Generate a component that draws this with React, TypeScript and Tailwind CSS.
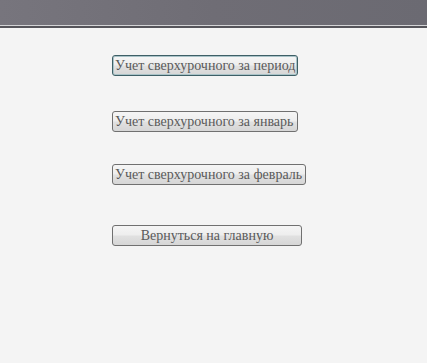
import React from "react";

const btn =
  "h-[21px] border rounded-[3px] bg-[linear-gradient(#f5f5f5_0%,#eeeeee_45%,#e0e0e0_55%,#d6d6d6_100%)] text-[#5a5a5a] text-[14px] leading-[19px] whitespace-nowrap";

export default function App() {
  return (
    <div className="w-[427px] h-[363px] bg-[#f4f4f4] flex flex-col" style={{ fontFamily: '"Liberation Serif", serif' }}>
      <div className="h-[25px] bg-[linear-gradient(90deg,#77757d,#6f6d75_50%,#6b6a72)]" />
      <div className="h-px bg-[#d4d4d6]" />
      <div className="h-[2px] bg-[#55545a]" />
      <div className="flex flex-col items-start pl-[112px] pt-[27px]">
        <button className={btn + " text-left px-[2px] border-[#3e5f66] shadow-[inset_0_0_0_1px_#a9c3c8]"}>Учет сверхурочного за период</button>
        <button className={btn + " text-left pl-[2px] pr-[4px] mt-[35px] border-[#707070]"}>Учет сверхурочного за январь</button>
        <button className={btn + " text-left pl-[2px] pr-[3px] mt-[32px] border-[#707070]"}>Учет сверхурочного за февраль</button>
        <button className={btn + " mt-[40px] w-[190px] text-center border-[#707070]"}>Вернуться на главную</button>
      </div>
    </div>
  );
}
